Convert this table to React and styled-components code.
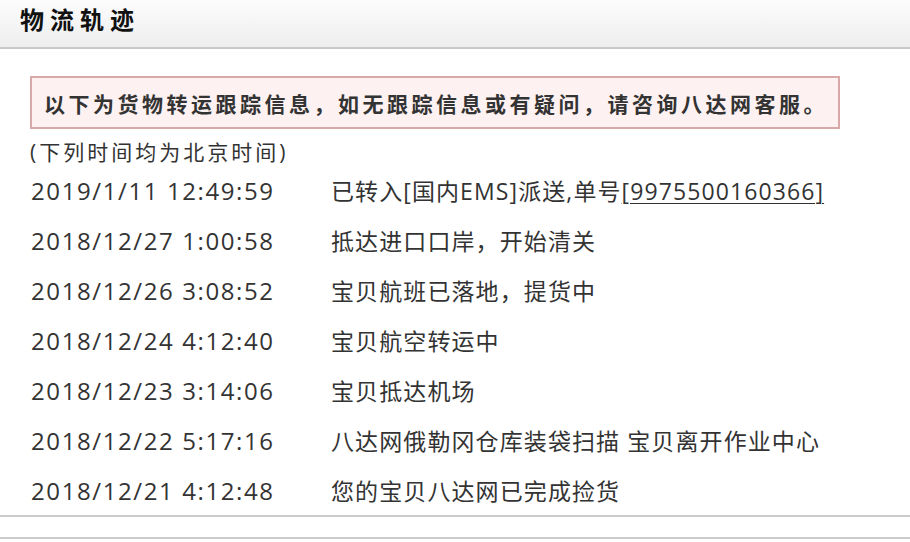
import React from "react";
import styled, { createGlobalStyle } from "styled-components";

const GlobalStyle = createGlobalStyle`
  html, body { margin: 0; padding: 0; background: #fff; }
  body { font-family: "Open Sans", "Noto Sans CJK SC", sans-serif; color: #333; }
`;

const Page = styled.div`
  width: 910px;
  display: flex;
  flex-direction: column;
`;

const Header = styled.div`
  height: 47px;
  display: flex;
  align-items: center;
  padding-left: 20px;
  background: linear-gradient(#fcfcfc, #eeeeee);
  border-bottom: 2px solid #c9c9c9;
`;

const Title = styled.h1`
  margin: -10px 0 0;
  font-family: "Noto Sans CJK SC", sans-serif;
  font-size: 24px;
  font-weight: 700;
  letter-spacing: 6px;
  color: #111;
  line-height: 1;
`;

const Body = styled.div`
  padding: 27px 0 0 30px;
  display: flex;
  flex-direction: column;
  border-bottom: 2px solid #cccccc;
`;

const Notice = styled.div`
  box-sizing: border-box;
  width: 810px;
  height: 53px;
  display: flex;
  align-items: center;
  padding-left: 12px;
  background: #fdf1f1;
  border: 2px solid #d9a9a9;
  font-family: "Noto Sans CJK SC", sans-serif;
  font-size: 21px;
  font-weight: 700;
  letter-spacing: 3.5px;
  color: #333;
`;

const Note = styled.div`
  padding-top: 10px;
  line-height: 26px;
  font-size: 21px;
  letter-spacing: 3px;
  color: #333;
`;

const Row = styled.div`
  height: 50px;
  display: flex;
  align-items: center;
  font-size: 23px;
  color: #333;
`;

const Time = styled.div`
  width: 300px;
  flex: none;
  font-size: 24px;
  letter-spacing: 1.6px;
  padding-left: 1px;
`;

const Desc = styled.div`
  letter-spacing: 1.1px;
`;

const TrackNo = styled.span`
  text-decoration: underline;
  text-underline-offset: 3px;
  text-decoration-thickness: 1px;
`;

const Footer = styled.div`
  margin-top: 20px;
  border-top: 2px solid #cccccc;
  height: 3px;
`;

const rows = [
  ["2019/1/11 12:49:59", null],
  ["2018/12/27 1:00:58", "抵达进口口岸，开始清关"],
  ["2018/12/26 3:08:52", "宝贝航班已落地，提货中"],
  ["2018/12/24 4:12:40", "宝贝航空转运中"],
  ["2018/12/23 3:14:06", "宝贝抵达机场"],
  ["2018/12/22 5:17:16", "八达网俄勒冈仓库装袋扫描 宝贝离开作业中心"],
  ["2018/12/21 4:12:48", "您的宝贝八达网已完成捡货"],
];

export default function App() {
  return (
    <Page>
      <GlobalStyle />
      <Header>
        <Title>物流轨迹</Title>
      </Header>
      <Body>
        <Notice>以下为货物转运跟踪信息，如无跟踪信息或有疑问，请咨询八达网客服。</Notice>
        <Note>(下列时间均为北京时间)</Note>
        {rows.map(([t, d]) => (
          <Row key={t}>
            <Time>{t}</Time>
            <Desc>
              {d ?? (
                <>
                  已转入[国内EMS]派送,单号<TrackNo>[9975500160366]</TrackNo>
                </>
              )}
            </Desc>
          </Row>
        ))}
      </Body>
      <Footer />
    </Page>
  );
}
